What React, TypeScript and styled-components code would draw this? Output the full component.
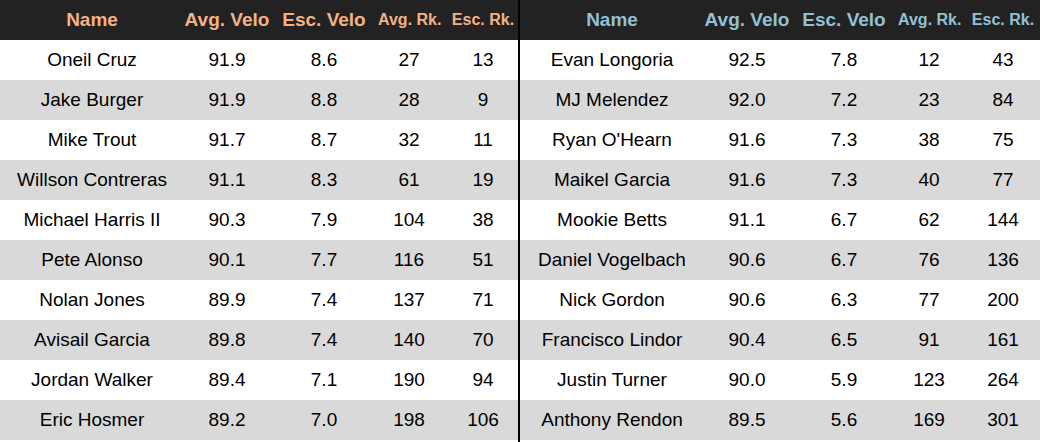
import React from "react";
import styled, { createGlobalStyle } from "styled-components";

const GlobalStyle = createGlobalStyle`
  html, body {
    margin: 0;
    padding: 0;
    background: #ffffff;
  }
  body {
    font-family: "Liberation Sans", Arial, sans-serif;
  }
`;

type Row = [string, string, string, string, string];

const leftRows: Row[] = [
  ["Oneil Cruz", "91.9", "8.6", "27", "13"],
  ["Jake Burger", "91.9", "8.8", "28", "9"],
  ["Mike Trout", "91.7", "8.7", "32", "11"],
  ["Willson Contreras", "91.1", "8.3", "61", "19"],
  ["Michael Harris II", "90.3", "7.9", "104", "38"],
  ["Pete Alonso", "90.1", "7.7", "116", "51"],
  ["Nolan Jones", "89.9", "7.4", "137", "71"],
  ["Avisail Garcia", "89.8", "7.4", "140", "70"],
  ["Jordan Walker", "89.4", "7.1", "190", "94"],
  ["Eric Hosmer", "89.2", "7.0", "198", "106"],
];

const rightRows: Row[] = [
  ["Evan Longoria", "92.5", "7.8", "12", "43"],
  ["MJ Melendez", "92.0", "7.2", "23", "84"],
  ["Ryan O'Hearn", "91.6", "7.3", "38", "75"],
  ["Maikel Garcia", "91.6", "7.3", "40", "77"],
  ["Mookie Betts", "91.1", "6.7", "62", "144"],
  ["Daniel Vogelbach", "90.6", "6.7", "76", "136"],
  ["Nick Gordon", "90.6", "6.3", "77", "200"],
  ["Francisco Lindor", "90.4", "6.5", "91", "161"],
  ["Justin Turner", "90.0", "5.9", "123", "264"],
  ["Anthony Rendon", "89.5", "5.6", "169", "301"],
];

const headers = [
  { label: "Name", small: false },
  { label: "Avg. Velo", small: false },
  { label: "Esc. Velo", small: false },
  { label: "Avg. Rk.", small: true },
  { label: "Esc. Rk.", small: true },
];

const Page = styled.div`
  display: flex;
  width: 1040px;
  height: 442px;
  background: #ffffff;
`;

const Panel = styled.div<{ $width: number }>`
  width: ${(p) => p.$width}px;
  height: 440px;
  overflow: hidden;
  flex: none;
`;

const Divider = styled.div`
  width: 2px;
  height: 442px;
  background: #000000;
  flex: none;
`;

const GridRow = styled.div<{ $variant: "head" | "white" | "grey" }>`
  display: grid;
  grid-template-columns: 184px 86px 108px 62px 86px;
  height: 40px;
  align-items: center;
  background: ${(p) =>
    p.$variant === "head" ? "#222222" : p.$variant === "grey" ? "#d9d9d9" : "#ffffff"};
`;

const HeadCell = styled.div<{ $small: boolean; $accent: string }>`
  text-align: center;
  white-space: nowrap;
  font-weight: bold;
  font-size: ${(p) => (p.$small ? "16px" : "19px")};
  color: ${(p) => p.$accent};
  line-height: 40px;
`;

const Cell = styled.div`
  text-align: center;
  white-space: nowrap;
  font-size: 19px;
  color: #000000;
  line-height: 40px;
`;

function Table({ rows, accent, width }: { rows: Row[]; accent: string; width: number }) {
  return (
    <Panel $width={width}>
      <GridRow $variant="head">
        {headers.map((h) => (
          <HeadCell key={h.label} $small={h.small} $accent={accent}>
            {h.label}
          </HeadCell>
        ))}
      </GridRow>
      {rows.map((r, i) => (
        <GridRow key={r[0]} $variant={i % 2 === 1 ? "grey" : "white"}>
          {r.map((v, j) => (
            <Cell key={j}>{v}</Cell>
          ))}
        </GridRow>
      ))}
    </Panel>
  );
}

export default function App() {
  return (
    <>
      <GlobalStyle />
      <Page>
        <Table rows={leftRows} accent="#f4b183" width={518} />
        <Divider />
        <Table rows={rightRows} accent="#92c0d4" width={520} />
      </Page>
    </>
  );
}
